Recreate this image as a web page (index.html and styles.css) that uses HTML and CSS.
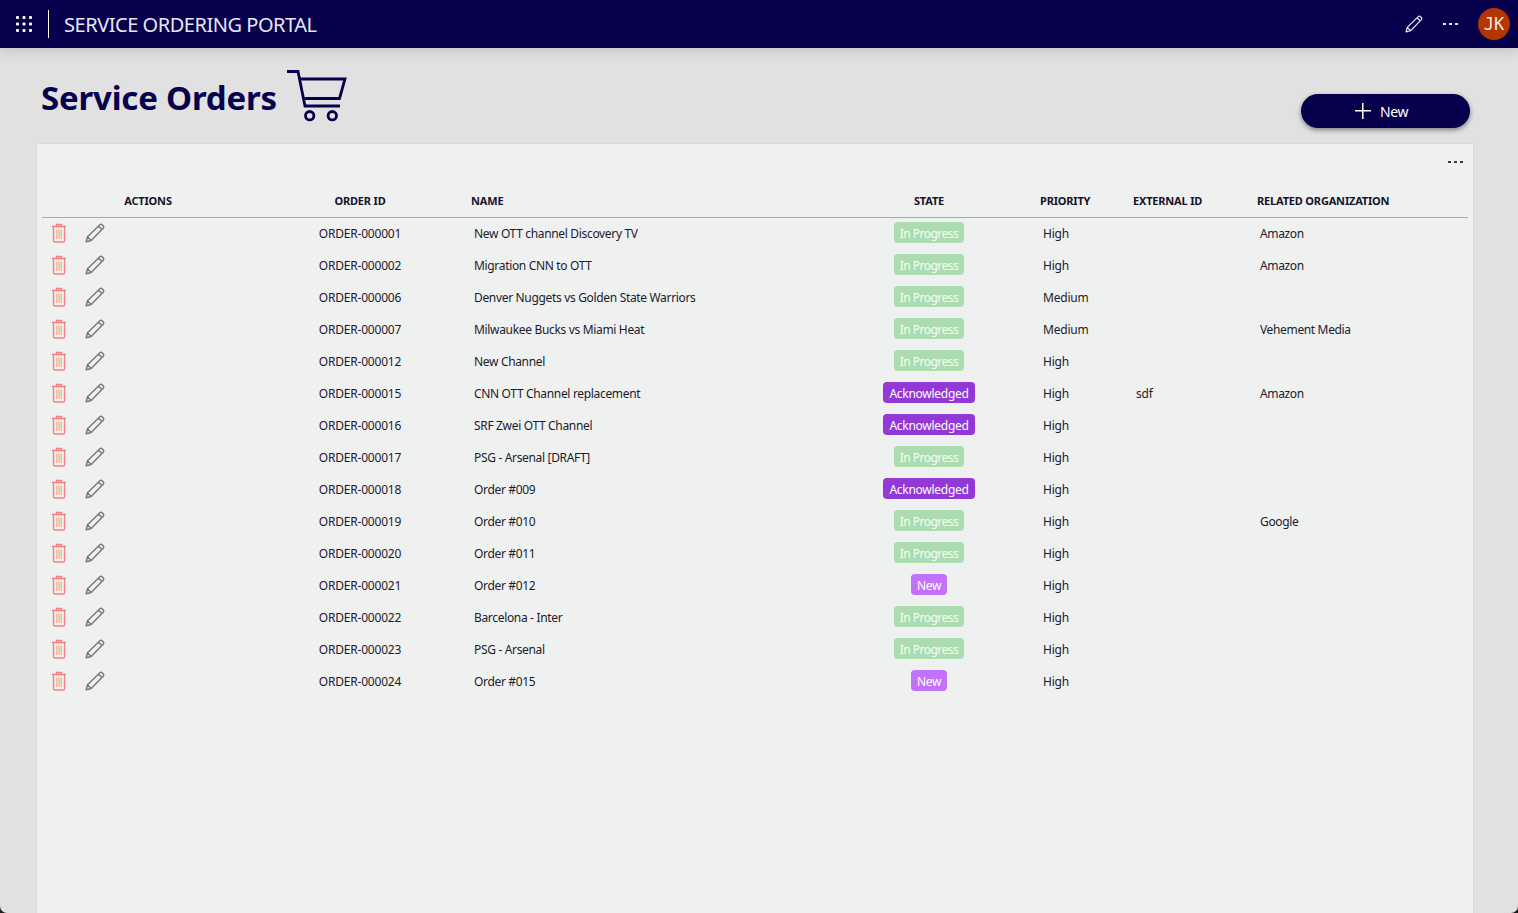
FILE: index.html
```html
<!DOCTYPE html>
<html lang="en">
<head>
    <meta charset="UTF-8">
    <title>Service Orders</title>
    <link rel="stylesheet" href="styles.css">
</head>
<body>
    <svg class="defs" width="0" height="0">
        <symbol id="trash" viewBox="0 0 16 20">
            <path d="M1 3.5h14M5.5 3.5V1.500h5v2M2.500 3.500v14.200q0 1.300 1.300 1.300h8.400q1.300 0 1.300-1.300V3.500" fill="none" stroke="#f97f7f" stroke-width="1.400"/>
            <path d="M5.800 6.500v9.500M8 6.500v9.500M10.200 6.500v9.500" fill="none" stroke="#f0ad88" stroke-width="1.200"/>
        </symbol>
        <symbol id="pencil" viewBox="0 0 20 20">
            <path d="M1.200 18.800l1.300-5L14.800 1.800q1.200-1 2.400 0l1 1q1 1.200 0 2.400L6.200 17.500zM2.500 13.800l3.700 3.700M13.500 3.100l3.400 3.400" fill="none" stroke="currentColor" stroke-width="1.400" stroke-linejoin="round"/>
        </symbol>
    </svg>

    <header class="topbar">
        <svg class="waffle" width="16" height="16" viewBox="0 0 16 16" fill="#fff">
            <rect x="0" y="0" width="3" height="3" rx="1"/><rect x="6.500" y="0" width="3" height="3" rx="1"/><rect x="13" y="0" width="3" height="3" rx="1"/>
            <rect x="0" y="6.500" width="3" height="3" rx="1"/><rect x="6.500" y="6.500" width="3" height="3" rx="1"/><rect x="13" y="6.500" width="3" height="3" rx="1"/>
            <rect x="0" y="13" width="3" height="3" rx="1"/><rect x="6.500" y="13" width="3" height="3" rx="1"/><rect x="13" y="13" width="3" height="3" rx="1"/>
        </svg>
        <span class="divider"></span>
        <span class="app-name">SERVICE ORDERING PORTAL</span>
        <svg class="top-pencil"><use href="#pencil"/></svg>
        <span class="dots">
            <i></i><i></i><i></i>
        </span>
        <span class="avatar">JK</span>
    </header>

    <main class="page">
        <div class="page-head">
            <h1>Service Orders</h1>
            <svg class="cart" width="60" height="52" viewBox="0 0 60 52" fill="none" stroke="#07004d" stroke-width="2.800">
                <path d="M0 1.500H11L18 36H53"/>
                <path d="M13 9H58L52.500 28.500H16"/>
                <circle cx="22.700" cy="45.700" r="4.200"/>
                <circle cx="45.300" cy="45.700" r="4.200"/>
            </svg>
            <button class="new-btn" type="button"><span class="plus"></span>New</button>
        </div>

        <section class="card">
            <div class="card-menu"><span class="dots dark"><i></i><i></i><i></i></span></div>
            <table class="orders">
                <colgroup>
                    <col class="c-actions"><col class="c-id"><col class="c-name"><col class="c-state"><col class="c-prio"><col class="c-ext"><col class="c-org">
                </colgroup>
                <thead>
                    <tr>
                        <th class="center">ACTIONS</th>
                        <th class="center">ORDER ID</th>
                        <th>NAME</th>
                        <th class="center">STATE</th>
                        <th>PRIORITY</th>
                        <th>EXTERNAL ID</th>
                        <th class="org">RELATED ORGANIZATION</th>
                    </tr>
                </thead>
                <tbody>
                    <tr><td class="acts"><svg class="i-trash"><use href="#trash"/></svg><svg class="i-pencil"><use href="#pencil"/></svg></td><td class="center">ORDER-000001</td><td class="name">New OTT channel Discovery TV</td><td class="state"><span class="badge progress">In Progress</span></td><td>High</td><td></td><td class="org">Amazon</td></tr>
                    <tr><td class="acts"><svg class="i-trash"><use href="#trash"/></svg><svg class="i-pencil"><use href="#pencil"/></svg></td><td class="center">ORDER-000002</td><td class="name">Migration CNN to OTT</td><td class="state"><span class="badge progress">In Progress</span></td><td>High</td><td></td><td class="org">Amazon</td></tr>
                    <tr><td class="acts"><svg class="i-trash"><use href="#trash"/></svg><svg class="i-pencil"><use href="#pencil"/></svg></td><td class="center">ORDER-000006</td><td class="name">Denver Nuggets vs Golden State Warriors</td><td class="state"><span class="badge progress">In Progress</span></td><td>Medium</td><td></td><td class="org"></td></tr>
                    <tr><td class="acts"><svg class="i-trash"><use href="#trash"/></svg><svg class="i-pencil"><use href="#pencil"/></svg></td><td class="center">ORDER-000007</td><td class="name">Milwaukee Bucks vs Miami Heat</td><td class="state"><span class="badge progress">In Progress</span></td><td>Medium</td><td></td><td class="org">Vehement Media</td></tr>
                    <tr><td class="acts"><svg class="i-trash"><use href="#trash"/></svg><svg class="i-pencil"><use href="#pencil"/></svg></td><td class="center">ORDER-000012</td><td class="name">New Channel</td><td class="state"><span class="badge progress">In Progress</span></td><td>High</td><td></td><td class="org"></td></tr>
                    <tr><td class="acts"><svg class="i-trash"><use href="#trash"/></svg><svg class="i-pencil"><use href="#pencil"/></svg></td><td class="center">ORDER-000015</td><td class="name">CNN OTT Channel replacement</td><td class="state"><span class="badge ack">Acknowledged</span></td><td>High</td><td>sdf</td><td class="org">Amazon</td></tr>
                    <tr><td class="acts"><svg class="i-trash"><use href="#trash"/></svg><svg class="i-pencil"><use href="#pencil"/></svg></td><td class="center">ORDER-000016</td><td class="name">SRF Zwei OTT Channel</td><td class="state"><span class="badge ack">Acknowledged</span></td><td>High</td><td></td><td class="org"></td></tr>
                    <tr><td class="acts"><svg class="i-trash"><use href="#trash"/></svg><svg class="i-pencil"><use href="#pencil"/></svg></td><td class="center">ORDER-000017</td><td class="name">PSG - Arsenal [DRAFT]</td><td class="state"><span class="badge progress">In Progress</span></td><td>High</td><td></td><td class="org"></td></tr>
                    <tr><td class="acts"><svg class="i-trash"><use href="#trash"/></svg><svg class="i-pencil"><use href="#pencil"/></svg></td><td class="center">ORDER-000018</td><td class="name">Order #009</td><td class="state"><span class="badge ack">Acknowledged</span></td><td>High</td><td></td><td class="org"></td></tr>
                    <tr><td class="acts"><svg class="i-trash"><use href="#trash"/></svg><svg class="i-pencil"><use href="#pencil"/></svg></td><td class="center">ORDER-000019</td><td class="name">Order #010</td><td class="state"><span class="badge progress">In Progress</span></td><td>High</td><td></td><td class="org">Google</td></tr>
                    <tr><td class="acts"><svg class="i-trash"><use href="#trash"/></svg><svg class="i-pencil"><use href="#pencil"/></svg></td><td class="center">ORDER-000020</td><td class="name">Order #011</td><td class="state"><span class="badge progress">In Progress</span></td><td>High</td><td></td><td class="org"></td></tr>
                    <tr><td class="acts"><svg class="i-trash"><use href="#trash"/></svg><svg class="i-pencil"><use href="#pencil"/></svg></td><td class="center">ORDER-000021</td><td class="name">Order #012</td><td class="state"><span class="badge fresh">New</span></td><td>High</td><td></td><td class="org"></td></tr>
                    <tr><td class="acts"><svg class="i-trash"><use href="#trash"/></svg><svg class="i-pencil"><use href="#pencil"/></svg></td><td class="center">ORDER-000022</td><td class="name">Barcelona - Inter</td><td class="state"><span class="badge progress">In Progress</span></td><td>High</td><td></td><td class="org"></td></tr>
                    <tr><td class="acts"><svg class="i-trash"><use href="#trash"/></svg><svg class="i-pencil"><use href="#pencil"/></svg></td><td class="center">ORDER-000023</td><td class="name">PSG - Arsenal</td><td class="state"><span class="badge progress">In Progress</span></td><td>High</td><td></td><td class="org"></td></tr>
                    <tr><td class="acts"><svg class="i-trash"><use href="#trash"/></svg><svg class="i-pencil"><use href="#pencil"/></svg></td><td class="center">ORDER-000024</td><td class="name">Order #015</td><td class="state"><span class="badge fresh">New</span></td><td>High</td><td></td><td class="org"></td></tr>
                </tbody>
            </table>
        </section>
    </main>
</body>
</html>
```

FILE: styles.css
```css
html { height: 100%; background: #1d1d1d; }
body { margin: 0; height: 913px; overflow: hidden; background: #e1e1e1; border-radius: 0 0 7px 7px; font-family: "Noto Sans", "Open Sans", sans-serif; color: #1c1b2b; display: flex; flex-direction: column; }
.defs { position: absolute; }

.topbar { flex: none; height: 48px; background: #07004d; color: #fff; display: flex; align-items: center; padding: 0 8px 0 16px; box-shadow: 0 4px 12px #0000001f; position: relative; }
.divider { width: 1px; height: 28px; background: #fff; margin: 0 15px 0 16px; }
.app-name { font-size: 20px; letter-spacing: -0.47px; color: #e8e6f2; flex: 1; }
.top-pencil { width: 18px; height: 18px; color: #e6e4ee; }
.dots { display: inline-flex; gap: 3px; margin: 0 20px; }
.dots i { width: 3px; height: 2px; background: #e6e4ee; }
.dots.dark { margin: 0; }
.dots.dark i { background: #3a3a3a; }
.avatar { width: 32px; height: 32px; border-radius: 50%; background: #b33600; color: #f3e6df; font-family: "DejaVu Sans Mono", monospace; font-size: 17px; display: flex; align-items: center; justify-content: center; }

.page { flex: 1; display: flex; flex-direction: column; padding: 0 44px 0 36px; min-height: 0; }
.page-head { height: 95px; flex: none; display: flex; align-items: flex-start; }
h1 { margin: 28px 0 0 5px; font-size: 33px; line-height: 44px; font-weight: 700; color: #07004d; letter-spacing: -0.2px; }
.cart { margin: 22px 0 0 10px; }
.new-btn { margin: 46px 4px 0 auto; width: 169px; height: 34px; padding: 0 8px 0 0; border: 0; border-radius: 17px; background: #07004d; color: #fff; font: 14px "Noto Sans", sans-serif; letter-spacing: -0.4px; display: flex; align-items: center; justify-content: center; box-shadow: 0 2px 5px #00000073; }
.plus { width: 16px; height: 16px; margin-right: 9px; background: linear-gradient(#fff, #fff) center / 16px 1.5px no-repeat, linear-gradient(#fff, #fff) center / 1.5px 16px no-repeat; }

.card { flex: 1; background: #eff1f0; border: 1px solid #d9d9d9; border-bottom: 0; padding: 0 4px 0 5px; min-height: 0; }
.card-menu { height: 41px; display: flex; justify-content: flex-end; align-items: center; padding: 0 6px 6px 0; box-sizing: border-box; }

.orders { width: 1426px; border-collapse: collapse; table-layout: fixed; font-size: 12px; letter-spacing: -0.2px; }
.c-actions, .c-id, .c-state { width: 212px; }
.c-name { width: 357px; }
.c-prio { width: 93px; }
.c-ext { width: 123px; }
.c-org { width: 217px; }
.orders th { height: 32px; padding: 0 0 0 5px; box-sizing: border-box; text-align: left; font-size: 11px; font-weight: 700; letter-spacing: -0.18px; color: #14132a; border-bottom: 1.5px solid #a9a9ac; }
.orders td { height: 32px; padding: 0 0 0 8px; border-bottom: 1px solid #ecefee; box-sizing: border-box; }
.orders th.center, .orders td.center { text-align: center; padding: 0; }
.orders td.acts { padding: 0 0 0 9px; }
.orders td.state { text-align: center; padding: 0 0 2px; }
.orders td.name { letter-spacing: -0.33px; }
.orders td.org { padding-left: 9px; letter-spacing: -0.35px; }
.orders th.org { padding-left: 6px; }
.i-trash { width: 16px; height: 20px; vertical-align: middle; }
.i-pencil { width: 20px; height: 20px; margin-left: 18px; vertical-align: middle; color: #77767a; }

.badge { display: inline-block; height: 21px; line-height: 23px; padding: 0 6px; border-radius: 4px; color: #fff; }
.progress { background: #acdcb2; color: #f5fdf5; letter-spacing: -0.52px; }
.ack { background: #9238d6; letter-spacing: -0.27px; }
.fresh { background: #c271fb; letter-spacing: -0.3px; }
```
